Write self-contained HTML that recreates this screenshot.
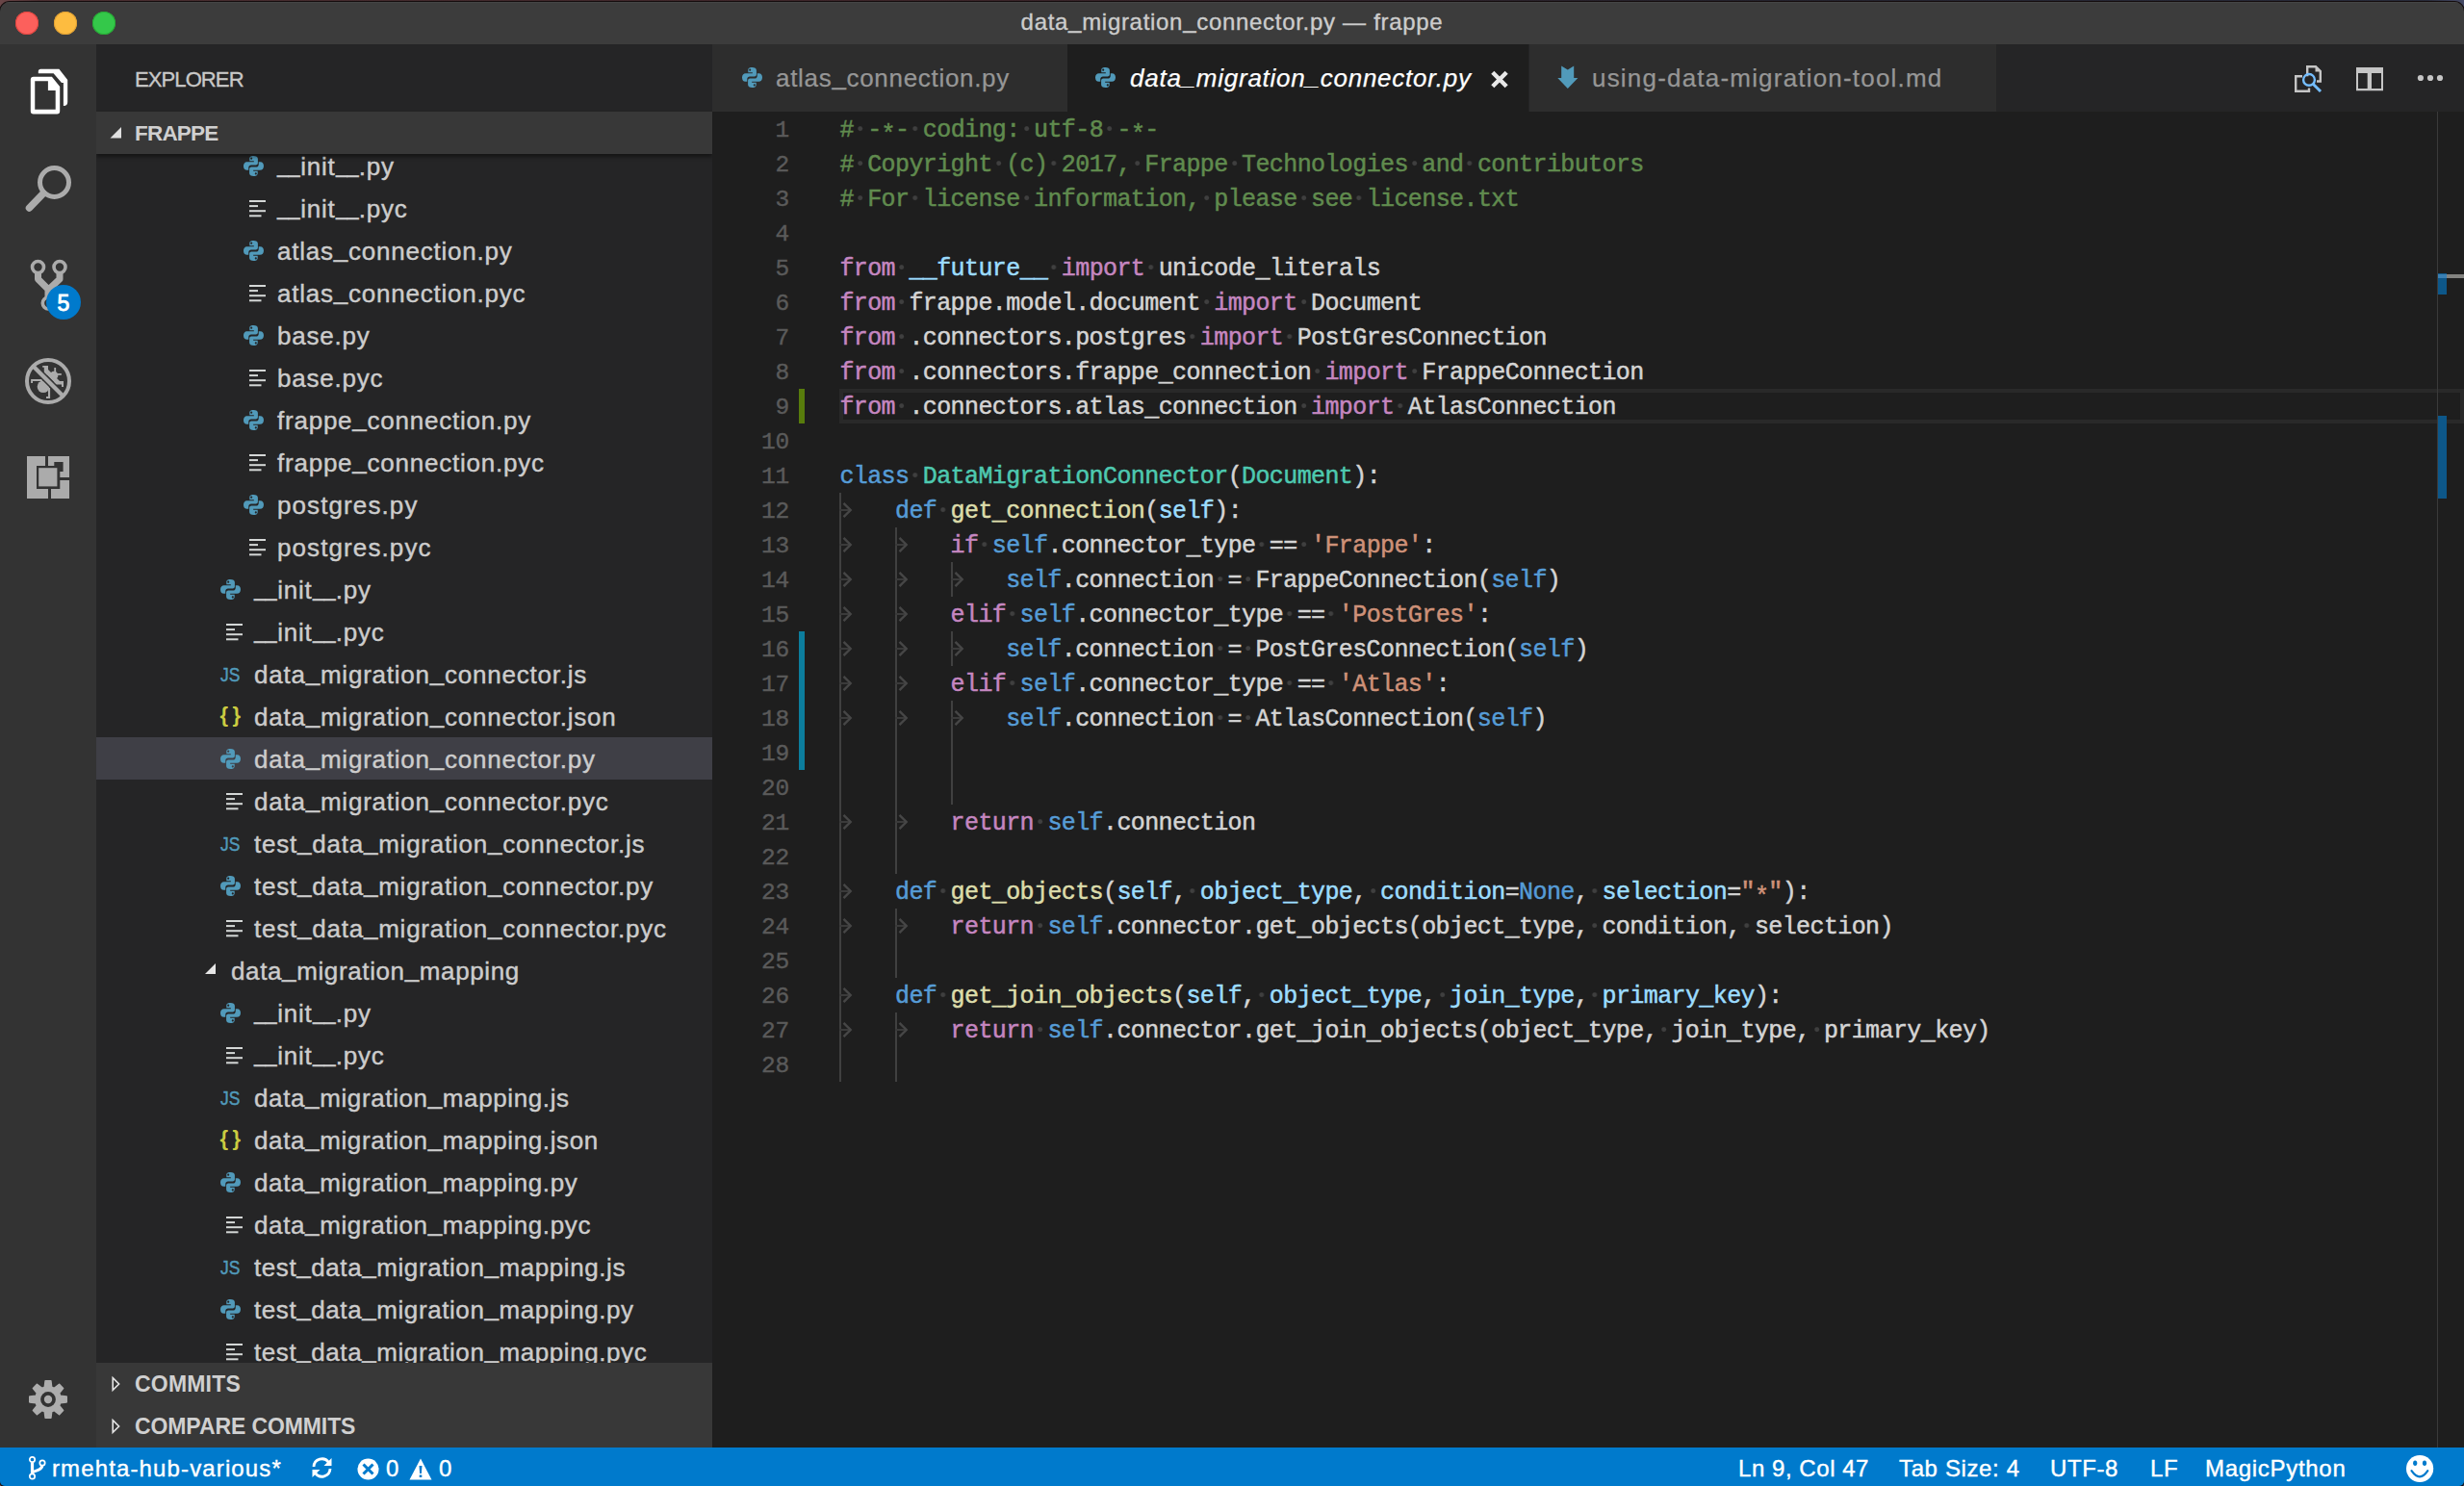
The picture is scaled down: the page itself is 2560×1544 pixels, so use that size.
<!DOCTYPE html>
<html><head><meta charset="utf-8"><title>VS Code</title>
<style>
*{box-sizing:border-box;margin:0;padding:0}
html,body{width:2560px;height:1544px;overflow:hidden;background:#1a1012;font-family:"Liberation Sans",sans-serif;}
#desk{position:absolute;left:0;top:0;width:2560px;height:1544px;background:linear-gradient(90deg,#6a4648 0,#4a2e30 1.500%,#3a2428 40%,#24222c 70%,#282b3a 98.500%,#454a66 100%);}
#win{position:absolute;left:0;top:2px;width:2560px;height:1542px;border-radius:10px 10px 5px 5px;overflow:hidden;background:#1e1e1e;box-shadow:0 0 0 1px #150d0e;}
#title{position:absolute;left:0;top:0;width:2560px;height:44px;background:#3c3c3c;border-top:1px solid #454545;}
#title .t{position:absolute;left:0;width:2560px;top:5px;text-align:center;color:#cccccc;font-size:24px;line-height:30px;letter-spacing:0.7px;-webkit-text-stroke:0.350px #cccccc;}
.tl{position:absolute;top:9px;width:24px;height:24px;border-radius:50%;}
#title u{text-decoration:none;position:relative;top:-2px;}
#act{position:absolute;left:0;top:44px;width:100px;height:1458px;background:#333333;}
#act svg{position:absolute;left:0;top:0;}
#side{position:absolute;left:100px;top:44px;width:640px;height:1458px;background:#252526;overflow:hidden;}
#ed{position:absolute;left:740px;top:44px;width:1820px;height:1458px;background:#1e1e1e;overflow:hidden;}
#tabs{position:absolute;left:0;top:0;width:1820px;height:70px;background:#252526;}
#status{position:absolute;left:0;top:1502px;width:2560px;height:40px;background:#007acc;color:#fff;font-size:24px;}

#side .hdr{position:absolute;left:0;width:640px;color:#cccccc;}
#explorer{top:0;height:70px;}
#explorer span{position:absolute;left:40px;top:21.500px;-webkit-text-stroke:0.350px #c8c8c8;font-size:22px;line-height:30px;letter-spacing:-0.9px;color:#c8c8c8;}
.sec{position:absolute;left:0;width:640px;height:44px;background:#383838;color:#d0d0d0;font-weight:bold;font-size:23px;line-height:45px;}
.sec span{position:absolute;left:40px;top:0;}
#tree{position:absolute;left:0;top:114px;width:640px;height:1256px;overflow:hidden;}
.row{position:absolute;left:0;width:640px;height:44px;color:#cccccc;font-size:26px;line-height:44px;letter-spacing:0.77px;white-space:pre;}
.row.sel{background:#3f3f46;}
.row .nm{position:absolute;top:0.500px;-webkit-text-stroke:0.420px #cccccc;}
.row .nm u{text-decoration:none;position:relative;top:-2.400px;}
.row .nm u.d{display:inline-block;width:24.200px;letter-spacing:0;transform:scaleX(0.820);transform-origin:0 50%;}
.row svg{position:absolute;top:11px;}
.row .js{position:absolute;top:1px;font-size:21px;color:#519aba;letter-spacing:0;-webkit-text-stroke:0.450px #519aba;transform:scaleX(0.830);transform-origin:0 50%;}
.row .json{position:absolute;top:-1px;margin-left:0.500px;font-size:22px;color:#cbcb41;letter-spacing:4.500px;font-weight:bold;}

.tab{position:absolute;top:0;height:70px;font-size:26px;line-height:70px;white-space:pre;}
.tab .nm{position:absolute;top:0;-webkit-text-stroke:0.25px;}
.tab svg{position:absolute;}
#code{position:absolute;left:0;top:70px;width:1820px;height:1388px;font-family:"Liberation Mono",monospace;font-size:25px;letter-spacing:-0.602px;}
.ln{position:absolute;left:0;width:79.900px;font-size:24.500px;letter-spacing:-0.300px;height:36px;line-height:36px;text-align:right;color:#5a5a5a;padding-top:2px;-webkit-text-stroke:0.400px #5a5a5a;}
.cl{position:absolute;left:132.400px;height:36px;line-height:36px;white-space:pre;color:#d4d4d4;padding-top:2px;-webkit-text-stroke:0.500px;}
.cl i{font-style:normal}
.cl b{font-weight:normal;position:relative;top:5px;}
.cl u{text-decoration:none;position:relative;top:1px;}
.tab u{text-decoration:none;position:relative;top:-2.200px;}
.c{color:#608b4e}.k{color:#c586c0}.s{color:#569cd6}.v{color:#9cdcfe}.t{color:#4ec9b0}.f{color:#dcdcaa}.q{color:#ce9178}.w{display:inline-block;height:36px;vertical-align:top;background-image:radial-gradient(circle at 6.700px 17.600px,#3f3f3f 0,#3f3f3f 1.800px,rgba(63,63,63,0) 3px);background-size:14.400px 36px;margin-top:-2px;}
.tb{display:inline-block;width:57.600px;height:36px;vertical-align:top;margin-top:-2px;}
.tb svg{display:block;}
.g{position:absolute;width:2px;background:#404040;}

#status span{position:absolute;top:0;line-height:44px;white-space:pre;-webkit-text-stroke:0.4px #fff;}
#status svg{position:absolute;}
</style></head><body>
<div id="desk"></div>
<div id="win">
<div id="title"><div class="t">data<u>_</u>migration<u>_</u>connector.py — frappe</div>
<div class="tl" style="left:16px;background:#fc605c;box-shadow:inset 0 0 0 1px #e2453f"></div>
<div class="tl" style="left:56px;background:#fdbc40;box-shadow:inset 0 0 0 1px #e0a033"></div>
<div class="tl" style="left:96px;background:#34c84a;box-shadow:inset 0 0 0 1px #27aa35"></div>
</div>
<div id="act"><svg width="100" height="1458" viewBox="0 46 100 1458">
<!-- files -->
<path fill="#fff" fill-rule="evenodd" d="M34.800 79.800 H53.900 L62.200 90.100 V115.400 Q62.200 118.400 59.200 118.400 H34.800 Q31.800 118.400 31.800 115.400 V82.800 Q31.800 79.800 34.800 79.800 Z M36.250 84.300 H49.900 V93.900 H57.700 V113.700 H36.250 Z"/>
<path fill="#fff" d="M39.800 76.200 V74.300 Q39.800 71.800 42.300 71.800 H61.400 L70.200 83.100 V106 Q70.200 110 66.200 110 H65.900 V85.900 H64 L55.600 76.200 Z"/>
<!-- search -->
<g fill="none" stroke="#ababab" stroke-linecap="round">
<circle cx="56.5" cy="189.5" r="15" stroke-width="5"/>
<path d="M45 201 L30.5 216" stroke-width="7.5"/>
</g>
<!-- git -->
<g fill="none" stroke="#ababab" stroke-width="3.6">
<circle cx="39.5" cy="277.5" r="6"/><circle cx="62" cy="277.5" r="6"/><circle cx="50.300" cy="315" r="6"/>
</g>
<path d="M39.500 284 V290 L50 300.500 V309 M62 284 V290 L52 299.500" fill="none" stroke="#ababab" stroke-width="7" stroke-linejoin="round"/>
<circle cx="66" cy="314" r="18" fill="#007acc"/>
<text x="66" y="322.5" text-anchor="middle" font-family="Liberation Sans" font-size="23" fill="#fff" stroke="#fff" stroke-width="0.900">5</text>
<!-- debug -->
<g fill="#ababab">
<circle cx="45" cy="401.700" r="6.300"/>
<circle cx="56.100" cy="390" r="4.300"/>
<path d="M32.100 394 H44 V396.100 H34 V398 H32.100 Z"/>
<path d="M50 403 H52.100 V414 H48 V412 H50 Z"/>
<path d="M44.200 380 H50 V390 H45.800 V381.800 H44.200 Z"/>
<rect x="56.300" y="382" width="1.800" height="5"/>
<rect x="58" y="388" width="5.800" height="1.800"/>
<path d="M56 396 H66 V402 H64 V399.500 H56 Z"/>
<path d="M47.500 385 L60.500 398" stroke="#ababab" stroke-width="5" fill="none"/>
</g>
<path d="M34 380 L66 412" stroke="#333" stroke-width="7.400" fill="none"/>
<g fill="none" stroke="#ababab">
<circle cx="50" cy="396" r="22" stroke-width="4"/>
<path d="M34.500 380.500 L65.500 411.500" stroke-width="4.300"/>
</g>
<!-- extensions -->
<g fill="#ababab">
<path d="M28 474 H47 V484 H38 V508 H50 V518 H28 Z"/>
<path d="M50 474 H72 V496 H62.300 V490 H65.600 V480 H56.300 V484 H50 Z"/>
<path d="M62.300 499 H72 V518 H53 V508 H62.300 Z"/>
<rect x="40.200" y="486.200" width="19.200" height="19.200"/>
</g>
<!-- gear -->
<g transform="translate(50 1454)">
<path d="M-3.64 -12.69 L-2.87 -19.19 L2.87 -19.19 L3.64 -12.69 L6.40 -11.54 L11.54 -15.59 L15.59 -11.54 L11.54 -6.40 L12.69 -3.64 L19.19 -2.87 L19.19 2.87 L12.69 3.64 L11.54 6.40 L15.59 11.54 L11.54 15.59 L6.40 11.54 L3.64 12.69 L2.87 19.19 L-2.87 19.19 L-3.64 12.69 L-6.40 11.54 L-11.54 15.59 L-15.59 11.54 L-11.54 6.40 L-12.69 3.64 L-19.19 2.87 L-19.19 -2.87 L-12.69 -3.64 L-11.54 -6.40 L-15.59 -11.54 L-11.54 -15.59 L-6.40 -11.54 Z" fill="#adadad" stroke="#adadad" stroke-width="1.6" stroke-linejoin="round"/>
<circle r="7.900" fill="#333"/><circle r="4.200" fill="#adadad"/>
</g>
</svg></div>
<div id="side"><div id="explorer" class="hdr"><span>EXPLORER</span></div>
<div id="tree"><div class="row" style="top:-10px"><svg style="left:153px;top:12px" width="21" height="21" viewBox="0 0 20 20"><g fill="#519aba" fill-rule="evenodd"><path d="M9.8 0C6.6 0 6 1.3 6 2.8V5h4.3v.9H3.6C1.4 5.9 0 7.500 0 10s1.200 4.100 3.300 4.100H5v-2.600C5 10 6.200 9 7.600 9h4.600c1.200 0 2-.9 2-2.100V2.800C14.200 1 12.600 0 9.800 0zM7.800 1.500a1 1 0 1 1 0 2 1 1 0 0 1 0-2z"/><path transform="rotate(180 10 10)" d="M9.8 0C6.6 0 6 1.3 6 2.8V5h4.3v.9H3.6C1.4 5.9 0 7.500 0 10s1.200 4.100 3.300 4.100H5v-2.600C5 10 6.200 9 7.600 9h4.600c1.200 0 2-.9 2-2.100V2.800C14.200 1 12.600 0 9.800 0zM7.800 1.500a1 1 0 1 1 0 2 1 1 0 0 1 0-2z"/></g></svg><span class="nm" style="left:188px;letter-spacing:0.77px"><u class="d">__</u>init<u class="d">__</u>.py</span></div><div class="row" style="top:34px"><svg style="left:159px;top:14px" width="18" height="18" viewBox="0 0 18 18"><g fill="#d4d7d6"><rect x="0" y="0" width="17" height="2"/><rect x="0" y="5.100" width="9" height="2"/><rect x="0" y="10.200" width="17" height="2"/><rect x="0" y="15.300" width="12.500" height="2"/></g></svg><span class="nm" style="left:188px;letter-spacing:0.77px"><u class="d">__</u>init<u class="d">__</u>.pyc</span></div><div class="row" style="top:78px"><svg style="left:153px;top:12px" width="21" height="21" viewBox="0 0 20 20"><g fill="#519aba" fill-rule="evenodd"><path d="M9.8 0C6.6 0 6 1.3 6 2.8V5h4.3v.9H3.6C1.4 5.9 0 7.500 0 10s1.200 4.100 3.300 4.100H5v-2.600C5 10 6.200 9 7.600 9h4.600c1.200 0 2-.9 2-2.100V2.800C14.200 1 12.600 0 9.800 0zM7.800 1.500a1 1 0 1 1 0 2 1 1 0 0 1 0-2z"/><path transform="rotate(180 10 10)" d="M9.8 0C6.6 0 6 1.3 6 2.8V5h4.3v.9H3.6C1.4 5.9 0 7.500 0 10s1.200 4.100 3.300 4.100H5v-2.600C5 10 6.200 9 7.600 9h4.600c1.200 0 2-.9 2-2.100V2.800C14.200 1 12.600 0 9.800 0zM7.800 1.500a1 1 0 1 1 0 2 1 1 0 0 1 0-2z"/></g></svg><span class="nm" style="left:188px;letter-spacing:0.77px">atlas<u>_</u>connection.py</span></div><div class="row" style="top:122px"><svg style="left:159px;top:14px" width="18" height="18" viewBox="0 0 18 18"><g fill="#d4d7d6"><rect x="0" y="0" width="17" height="2"/><rect x="0" y="5.100" width="9" height="2"/><rect x="0" y="10.200" width="17" height="2"/><rect x="0" y="15.300" width="12.500" height="2"/></g></svg><span class="nm" style="left:188px;letter-spacing:0.77px">atlas<u>_</u>connection.pyc</span></div><div class="row" style="top:166px"><svg style="left:153px;top:12px" width="21" height="21" viewBox="0 0 20 20"><g fill="#519aba" fill-rule="evenodd"><path d="M9.8 0C6.6 0 6 1.3 6 2.8V5h4.3v.9H3.6C1.4 5.9 0 7.500 0 10s1.200 4.100 3.300 4.100H5v-2.600C5 10 6.200 9 7.600 9h4.600c1.200 0 2-.9 2-2.100V2.800C14.200 1 12.600 0 9.800 0zM7.800 1.500a1 1 0 1 1 0 2 1 1 0 0 1 0-2z"/><path transform="rotate(180 10 10)" d="M9.8 0C6.6 0 6 1.3 6 2.8V5h4.3v.9H3.6C1.4 5.9 0 7.500 0 10s1.200 4.100 3.300 4.100H5v-2.600C5 10 6.200 9 7.600 9h4.600c1.200 0 2-.9 2-2.100V2.800C14.200 1 12.600 0 9.800 0zM7.800 1.500a1 1 0 1 1 0 2 1 1 0 0 1 0-2z"/></g></svg><span class="nm" style="left:188px;letter-spacing:0.77px">base.py</span></div><div class="row" style="top:210px"><svg style="left:159px;top:14px" width="18" height="18" viewBox="0 0 18 18"><g fill="#d4d7d6"><rect x="0" y="0" width="17" height="2"/><rect x="0" y="5.100" width="9" height="2"/><rect x="0" y="10.200" width="17" height="2"/><rect x="0" y="15.300" width="12.500" height="2"/></g></svg><span class="nm" style="left:188px;letter-spacing:0.77px">base.pyc</span></div><div class="row" style="top:254px"><svg style="left:153px;top:12px" width="21" height="21" viewBox="0 0 20 20"><g fill="#519aba" fill-rule="evenodd"><path d="M9.8 0C6.6 0 6 1.3 6 2.8V5h4.3v.9H3.6C1.4 5.9 0 7.500 0 10s1.200 4.100 3.300 4.100H5v-2.600C5 10 6.200 9 7.600 9h4.600c1.200 0 2-.9 2-2.100V2.800C14.200 1 12.600 0 9.800 0zM7.800 1.500a1 1 0 1 1 0 2 1 1 0 0 1 0-2z"/><path transform="rotate(180 10 10)" d="M9.8 0C6.6 0 6 1.3 6 2.8V5h4.3v.9H3.6C1.4 5.9 0 7.500 0 10s1.200 4.100 3.300 4.100H5v-2.600C5 10 6.200 9 7.600 9h4.600c1.200 0 2-.9 2-2.100V2.800C14.200 1 12.600 0 9.800 0zM7.800 1.500a1 1 0 1 1 0 2 1 1 0 0 1 0-2z"/></g></svg><span class="nm" style="left:188px;letter-spacing:0.77px">frappe<u>_</u>connection.py</span></div><div class="row" style="top:298px"><svg style="left:159px;top:14px" width="18" height="18" viewBox="0 0 18 18"><g fill="#d4d7d6"><rect x="0" y="0" width="17" height="2"/><rect x="0" y="5.100" width="9" height="2"/><rect x="0" y="10.200" width="17" height="2"/><rect x="0" y="15.300" width="12.500" height="2"/></g></svg><span class="nm" style="left:188px;letter-spacing:0.77px">frappe<u>_</u>connection.pyc</span></div><div class="row" style="top:342px"><svg style="left:153px;top:12px" width="21" height="21" viewBox="0 0 20 20"><g fill="#519aba" fill-rule="evenodd"><path d="M9.8 0C6.6 0 6 1.3 6 2.8V5h4.3v.9H3.6C1.4 5.9 0 7.500 0 10s1.200 4.100 3.300 4.100H5v-2.600C5 10 6.200 9 7.600 9h4.600c1.200 0 2-.9 2-2.100V2.800C14.200 1 12.600 0 9.800 0zM7.800 1.500a1 1 0 1 1 0 2 1 1 0 0 1 0-2z"/><path transform="rotate(180 10 10)" d="M9.8 0C6.6 0 6 1.3 6 2.8V5h4.3v.9H3.6C1.4 5.9 0 7.500 0 10s1.200 4.100 3.300 4.100H5v-2.600C5 10 6.200 9 7.600 9h4.600c1.200 0 2-.9 2-2.100V2.800C14.200 1 12.600 0 9.800 0zM7.800 1.500a1 1 0 1 1 0 2 1 1 0 0 1 0-2z"/></g></svg><span class="nm" style="left:188px;letter-spacing:1.10px">postgres.py</span></div><div class="row" style="top:386px"><svg style="left:159px;top:14px" width="18" height="18" viewBox="0 0 18 18"><g fill="#d4d7d6"><rect x="0" y="0" width="17" height="2"/><rect x="0" y="5.100" width="9" height="2"/><rect x="0" y="10.200" width="17" height="2"/><rect x="0" y="15.300" width="12.500" height="2"/></g></svg><span class="nm" style="left:188px;letter-spacing:1.10px">postgres.pyc</span></div><div class="row" style="top:430px"><svg style="left:129px;top:12px" width="21" height="21" viewBox="0 0 20 20"><g fill="#519aba" fill-rule="evenodd"><path d="M9.8 0C6.6 0 6 1.3 6 2.8V5h4.3v.9H3.6C1.4 5.9 0 7.500 0 10s1.200 4.100 3.300 4.100H5v-2.600C5 10 6.200 9 7.600 9h4.600c1.200 0 2-.9 2-2.100V2.800C14.200 1 12.600 0 9.800 0zM7.800 1.500a1 1 0 1 1 0 2 1 1 0 0 1 0-2z"/><path transform="rotate(180 10 10)" d="M9.8 0C6.6 0 6 1.3 6 2.8V5h4.3v.9H3.6C1.4 5.9 0 7.500 0 10s1.200 4.100 3.300 4.100H5v-2.600C5 10 6.200 9 7.600 9h4.600c1.200 0 2-.9 2-2.100V2.800C14.200 1 12.600 0 9.800 0zM7.800 1.500a1 1 0 1 1 0 2 1 1 0 0 1 0-2z"/></g></svg><span class="nm" style="left:164px;letter-spacing:0.77px"><u class="d">__</u>init<u class="d">__</u>.py</span></div><div class="row" style="top:474px"><svg style="left:135px;top:14px" width="18" height="18" viewBox="0 0 18 18"><g fill="#d4d7d6"><rect x="0" y="0" width="17" height="2"/><rect x="0" y="5.100" width="9" height="2"/><rect x="0" y="10.200" width="17" height="2"/><rect x="0" y="15.300" width="12.500" height="2"/></g></svg><span class="nm" style="left:164px;letter-spacing:0.77px"><u class="d">__</u>init<u class="d">__</u>.pyc</span></div><div class="row" style="top:518px"><span class="js" style="left:129px">JS</span><span class="nm" style="left:164px;letter-spacing:0.77px">data<u>_</u>migration<u>_</u>connector.js</span></div><div class="row" style="top:562px"><span class="json" style="left:128px">{}</span><span class="nm" style="left:164px;letter-spacing:0.77px">data<u>_</u>migration<u>_</u>connector.json</span></div><div class="row sel" style="top:606px"><svg style="left:129px;top:12px" width="21" height="21" viewBox="0 0 20 20"><g fill="#519aba" fill-rule="evenodd"><path d="M9.8 0C6.6 0 6 1.3 6 2.8V5h4.3v.9H3.6C1.4 5.9 0 7.500 0 10s1.200 4.100 3.300 4.100H5v-2.600C5 10 6.200 9 7.600 9h4.600c1.200 0 2-.9 2-2.100V2.800C14.200 1 12.600 0 9.800 0zM7.800 1.500a1 1 0 1 1 0 2 1 1 0 0 1 0-2z"/><path transform="rotate(180 10 10)" d="M9.8 0C6.6 0 6 1.3 6 2.8V5h4.3v.9H3.6C1.4 5.9 0 7.500 0 10s1.200 4.100 3.300 4.100H5v-2.600C5 10 6.200 9 7.600 9h4.600c1.200 0 2-.9 2-2.100V2.800C14.200 1 12.600 0 9.800 0zM7.800 1.500a1 1 0 1 1 0 2 1 1 0 0 1 0-2z"/></g></svg><span class="nm" style="left:164px;letter-spacing:0.77px">data<u>_</u>migration<u>_</u>connector.py</span></div><div class="row" style="top:650px"><svg style="left:135px;top:14px" width="18" height="18" viewBox="0 0 18 18"><g fill="#d4d7d6"><rect x="0" y="0" width="17" height="2"/><rect x="0" y="5.100" width="9" height="2"/><rect x="0" y="10.200" width="17" height="2"/><rect x="0" y="15.300" width="12.500" height="2"/></g></svg><span class="nm" style="left:164px;letter-spacing:0.77px">data<u>_</u>migration<u>_</u>connector.pyc</span></div><div class="row" style="top:694px"><span class="js" style="left:129px">JS</span><span class="nm" style="left:164px;letter-spacing:0.77px">test<u>_</u>data<u>_</u>migration<u>_</u>connector.js</span></div><div class="row" style="top:738px"><svg style="left:129px;top:12px" width="21" height="21" viewBox="0 0 20 20"><g fill="#519aba" fill-rule="evenodd"><path d="M9.8 0C6.6 0 6 1.3 6 2.8V5h4.3v.9H3.6C1.4 5.9 0 7.500 0 10s1.200 4.100 3.300 4.100H5v-2.600C5 10 6.200 9 7.600 9h4.600c1.200 0 2-.9 2-2.100V2.800C14.200 1 12.600 0 9.800 0zM7.800 1.500a1 1 0 1 1 0 2 1 1 0 0 1 0-2z"/><path transform="rotate(180 10 10)" d="M9.8 0C6.6 0 6 1.3 6 2.8V5h4.3v.9H3.6C1.4 5.9 0 7.500 0 10s1.200 4.100 3.300 4.100H5v-2.600C5 10 6.200 9 7.600 9h4.600c1.200 0 2-.9 2-2.100V2.800C14.200 1 12.600 0 9.800 0zM7.800 1.500a1 1 0 1 1 0 2 1 1 0 0 1 0-2z"/></g></svg><span class="nm" style="left:164px;letter-spacing:0.77px">test<u>_</u>data<u>_</u>migration<u>_</u>connector.py</span></div><div class="row" style="top:782px"><svg style="left:135px;top:14px" width="18" height="18" viewBox="0 0 18 18"><g fill="#d4d7d6"><rect x="0" y="0" width="17" height="2"/><rect x="0" y="5.100" width="9" height="2"/><rect x="0" y="10.200" width="17" height="2"/><rect x="0" y="15.300" width="12.500" height="2"/></g></svg><span class="nm" style="left:164px;letter-spacing:0.77px">test<u>_</u>data<u>_</u>migration<u>_</u>connector.pyc</span></div><div class="row" style="top:826px"><svg style="left:112px;top:14px" width="14" height="14" viewBox="0 0 14 14"><path d="M12 1 V12 H1 Z" fill="#e6e6e6"/></svg><span class="nm" style="left:140px;letter-spacing:0.62px">data<u>_</u>migration<u>_</u>mapping</span></div><div class="row" style="top:870px"><svg style="left:129px;top:12px" width="21" height="21" viewBox="0 0 20 20"><g fill="#519aba" fill-rule="evenodd"><path d="M9.8 0C6.6 0 6 1.3 6 2.8V5h4.3v.9H3.6C1.4 5.9 0 7.500 0 10s1.200 4.100 3.300 4.100H5v-2.600C5 10 6.200 9 7.600 9h4.600c1.200 0 2-.9 2-2.100V2.800C14.200 1 12.600 0 9.800 0zM7.800 1.500a1 1 0 1 1 0 2 1 1 0 0 1 0-2z"/><path transform="rotate(180 10 10)" d="M9.8 0C6.6 0 6 1.3 6 2.8V5h4.3v.9H3.6C1.4 5.9 0 7.500 0 10s1.200 4.100 3.300 4.100H5v-2.600C5 10 6.200 9 7.600 9h4.600c1.200 0 2-.9 2-2.100V2.800C14.200 1 12.600 0 9.800 0zM7.800 1.500a1 1 0 1 1 0 2 1 1 0 0 1 0-2z"/></g></svg><span class="nm" style="left:164px;letter-spacing:0.77px"><u class="d">__</u>init<u class="d">__</u>.py</span></div><div class="row" style="top:914px"><svg style="left:135px;top:14px" width="18" height="18" viewBox="0 0 18 18"><g fill="#d4d7d6"><rect x="0" y="0" width="17" height="2"/><rect x="0" y="5.100" width="9" height="2"/><rect x="0" y="10.200" width="17" height="2"/><rect x="0" y="15.300" width="12.500" height="2"/></g></svg><span class="nm" style="left:164px;letter-spacing:0.77px"><u class="d">__</u>init<u class="d">__</u>.pyc</span></div><div class="row" style="top:958px"><span class="js" style="left:129px">JS</span><span class="nm" style="left:164px;letter-spacing:0.62px">data<u>_</u>migration<u>_</u>mapping.js</span></div><div class="row" style="top:1002px"><span class="json" style="left:128px">{}</span><span class="nm" style="left:164px;letter-spacing:0.62px">data<u>_</u>migration<u>_</u>mapping.json</span></div><div class="row" style="top:1046px"><svg style="left:129px;top:12px" width="21" height="21" viewBox="0 0 20 20"><g fill="#519aba" fill-rule="evenodd"><path d="M9.8 0C6.6 0 6 1.3 6 2.8V5h4.3v.9H3.6C1.4 5.9 0 7.500 0 10s1.200 4.100 3.300 4.100H5v-2.600C5 10 6.200 9 7.600 9h4.600c1.200 0 2-.9 2-2.100V2.800C14.200 1 12.600 0 9.800 0zM7.800 1.500a1 1 0 1 1 0 2 1 1 0 0 1 0-2z"/><path transform="rotate(180 10 10)" d="M9.8 0C6.6 0 6 1.3 6 2.8V5h4.3v.9H3.6C1.4 5.9 0 7.500 0 10s1.200 4.100 3.300 4.100H5v-2.600C5 10 6.200 9 7.600 9h4.600c1.200 0 2-.9 2-2.100V2.800C14.200 1 12.600 0 9.800 0zM7.800 1.500a1 1 0 1 1 0 2 1 1 0 0 1 0-2z"/></g></svg><span class="nm" style="left:164px;letter-spacing:0.62px">data<u>_</u>migration<u>_</u>mapping.py</span></div><div class="row" style="top:1090px"><svg style="left:135px;top:14px" width="18" height="18" viewBox="0 0 18 18"><g fill="#d4d7d6"><rect x="0" y="0" width="17" height="2"/><rect x="0" y="5.100" width="9" height="2"/><rect x="0" y="10.200" width="17" height="2"/><rect x="0" y="15.300" width="12.500" height="2"/></g></svg><span class="nm" style="left:164px;letter-spacing:0.62px">data<u>_</u>migration<u>_</u>mapping.pyc</span></div><div class="row" style="top:1134px"><span class="js" style="left:129px">JS</span><span class="nm" style="left:164px;letter-spacing:0.58px">test<u>_</u>data<u>_</u>migration<u>_</u>mapping.js</span></div><div class="row" style="top:1178px"><svg style="left:129px;top:12px" width="21" height="21" viewBox="0 0 20 20"><g fill="#519aba" fill-rule="evenodd"><path d="M9.8 0C6.6 0 6 1.3 6 2.8V5h4.3v.9H3.6C1.4 5.9 0 7.500 0 10s1.200 4.100 3.300 4.100H5v-2.600C5 10 6.200 9 7.600 9h4.600c1.200 0 2-.9 2-2.100V2.800C14.200 1 12.600 0 9.800 0zM7.800 1.500a1 1 0 1 1 0 2 1 1 0 0 1 0-2z"/><path transform="rotate(180 10 10)" d="M9.8 0C6.6 0 6 1.3 6 2.8V5h4.3v.9H3.6C1.4 5.9 0 7.500 0 10s1.200 4.100 3.300 4.100H5v-2.600C5 10 6.200 9 7.600 9h4.600c1.200 0 2-.9 2-2.100V2.800C14.200 1 12.600 0 9.800 0zM7.800 1.500a1 1 0 1 1 0 2 1 1 0 0 1 0-2z"/></g></svg><span class="nm" style="left:164px;letter-spacing:0.58px">test<u>_</u>data<u>_</u>migration<u>_</u>mapping.py</span></div><div class="row" style="top:1222px"><svg style="left:135px;top:14px" width="18" height="18" viewBox="0 0 18 18"><g fill="#d4d7d6"><rect x="0" y="0" width="17" height="2"/><rect x="0" y="5.100" width="9" height="2"/><rect x="0" y="10.200" width="17" height="2"/><rect x="0" y="15.300" width="12.500" height="2"/></g></svg><span class="nm" style="left:164px;letter-spacing:0.58px">test<u>_</u>data<u>_</u>migration<u>_</u>mapping.pyc</span></div></div>
<div class="sec" style="top:70px;box-shadow:0 3px 4px rgba(0,0,0,0.45)"><svg style="position:absolute;left:14px;top:15px" width="14" height="14" viewBox="0 0 14 14"><path d="M12 1 V12.500 H0.500 Z" fill="#e0e0e0"/></svg><span style="letter-spacing:-0.800px;font-size:22.500px">FRAPPE</span></div>
<div class="sec" style="top:1370px"><svg style="position:absolute;left:14px;top:13px" width="12" height="18" viewBox="0 0 12 18"><path d="M3.200 2.600 L9.600 9 L3.200 15.400 Z" fill="none" stroke="#e4e4e4" stroke-width="1.600" stroke-linejoin="miter"/></svg><span style="letter-spacing:0.2px">COMMITS</span></div>
<div class="sec" style="top:1414px"><svg style="position:absolute;left:14px;top:13px" width="12" height="18" viewBox="0 0 12 18"><path d="M3.200 2.600 L9.600 9 L3.200 15.400 Z" fill="none" stroke="#e4e4e4" stroke-width="1.600" stroke-linejoin="miter"/></svg><span style="letter-spacing:-0.1px">COMPARE COMMITS</span></div></div>
<div id="ed"><div id="tabs"><div class="tab" style="left:0;width:369px;background:#2d2d2d;color:#969696"><svg style="left:31px;top:24px" width="21" height="21" viewBox="0 0 20 20"><g fill="#519aba" fill-rule="evenodd"><path d="M9.8 0C6.6 0 6 1.3 6 2.8V5h4.3v.9H3.6C1.4 5.9 0 7.500 0 10s1.200 4.100 3.300 4.100H5v-2.600C5 10 6.200 9 7.600 9h4.600c1.200 0 2-.9 2-2.100V2.800C14.200 1 12.600 0 9.800 0zM7.800 1.500a1 1 0 1 1 0 2 1 1 0 0 1 0-2z"/><path transform="rotate(180 10 10)" d="M9.8 0C6.6 0 6 1.3 6 2.8V5h4.3v.9H3.6C1.4 5.9 0 7.500 0 10s1.200 4.100 3.300 4.100H5v-2.600C5 10 6.200 9 7.600 9h4.600c1.200 0 2-.9 2-2.100V2.800C14.200 1 12.600 0 9.800 0zM7.800 1.500a1 1 0 1 1 0 2 1 1 0 0 1 0-2z"/></g></svg><span class="nm" style="left:66px;letter-spacing:0.69px">atlas<u>_</u>connection.py</span></div><div class="tab" style="left:369px;width:479px;background:#1e1e1e;color:#ffffff;font-style:italic"><svg style="left:29px;top:24px" width="21" height="21" viewBox="0 0 20 20"><g fill="#519aba" fill-rule="evenodd"><path d="M9.8 0C6.6 0 6 1.3 6 2.8V5h4.3v.9H3.6C1.4 5.9 0 7.500 0 10s1.200 4.100 3.300 4.100H5v-2.600C5 10 6.200 9 7.600 9h4.600c1.200 0 2-.9 2-2.100V2.800C14.200 1 12.600 0 9.800 0zM7.800 1.500a1 1 0 1 1 0 2 1 1 0 0 1 0-2z"/><path transform="rotate(180 10 10)" d="M9.8 0C6.6 0 6 1.3 6 2.8V5h4.3v.9H3.6C1.4 5.9 0 7.500 0 10s1.200 4.100 3.300 4.100H5v-2.600C5 10 6.200 9 7.600 9h4.600c1.200 0 2-.9 2-2.100V2.800C14.200 1 12.600 0 9.800 0zM7.800 1.500a1 1 0 1 1 0 2 1 1 0 0 1 0-2z"/></g></svg><span class="nm" style="left:65px;letter-spacing:0.75px">data<u>_</u>migration<u>_</u>connector.py</span><svg style="left:438px;top:25px" width="22" height="22" viewBox="0 0 22 22"><path d="M3.800 4.300 L18.200 18.700 M18.200 4.300 L3.800 18.700" stroke="#e8e8e8" stroke-width="4.400" fill="none"/></svg></div><div class="tab" style="left:849px;width:485px;background:#2d2d2d;color:#969696"><svg style="left:29px;top:22px" width="22" height="25" viewBox="0 0 22 25"><path d="M4.2 0.600 L10.800 4.600 L17.200 0.600 V13 H21.400 L10.800 24 L0.300 13 H4.200 Z" fill="#519aba"/></svg><span class="nm" style="left:65px;letter-spacing:1.2px">using-data-migration-tool.md</span></div><svg style="position:absolute;left:1630px;top:14px" width="180" height="44" viewBox="2370 60 180 44"><g fill="none" stroke="#c5c5c5" stroke-width="2.400"><path d="M2397.200 79.200 V69.200 H2406 L2410.800 74 V84.500 H2407"/><path d="M2392 79.200 H2385.200 V94.700 H2399 V91.500"/></g><path d="M2405.500 69 V74.500 H2411 Z" fill="#c5c5c5"/><circle cx="2399" cy="82.900" r="5.900" fill="none" stroke="#75beff" stroke-width="2.400"/><path d="M2403.200 87.200 L2411 95" stroke="#75beff" stroke-width="3" fill="none"/><path d="M2448 70 H2476 V94.200 H2448 Z M2450 76 V92 H2459.700 V76 Z M2464 76 V92 H2474 V76 Z" fill="#c5c5c5" fill-rule="evenodd"/><circle cx="2514.900" cy="81" r="3.100" fill="#c5c5c5"/><circle cx="2525" cy="81" r="3.100" fill="#c5c5c5"/><circle cx="2535" cy="81" r="3.100" fill="#c5c5c5"/></svg></div><div id="code"><svg width="0" height="0" style="position:absolute"><symbol id="ar" viewBox="0 0 16 36"><path d="M0 18 H11" stroke="#3a3a3a" stroke-width="2" fill="none"/><path d="M4.500 10.800 L11.700 18 L4.500 25.200" stroke="#464646" stroke-width="2.400" fill="none"/></symbol></svg><div style="position:absolute;left:132px;top:288px;width:1688px;height:36px;border:4px solid #292929"></div><div style="position:absolute;left:90px;top:288px;width:6px;height:36px;background:#587c0c"></div><div style="position:absolute;left:90px;top:540px;width:6px;height:144px;background:#0c7d9d"></div><div class="g" style="left:132px;top:396px;height:612px"></div><div class="g" style="left:190px;top:432px;height:360px"></div><div class="g" style="left:190px;top:828px;height:72px"></div><div class="g" style="left:190px;top:936px;height:72px"></div><div class="g" style="left:248px;top:468px;height:36px"></div><div class="g" style="left:248px;top:540px;height:36px"></div><div class="g" style="left:248px;top:612px;height:108px"></div><div class="ln" style="top:0px">1</div><div class="cl" style="top:0px"><i class="c">#</i><i class="w"> </i><i class="c">-<b>*</b>-</i><i class="w"> </i><i class="c">coding:</i><i class="w"> </i><i class="c">utf-8</i><i class="w"> </i><i class="c">-<b>*</b>-</i></div><div class="ln" style="top:36px">2</div><div class="cl" style="top:36px"><i class="c">#</i><i class="w"> </i><i class="c">Copyright</i><i class="w"> </i><i class="c">(c)</i><i class="w"> </i><i class="c">2017,</i><i class="w"> </i><i class="c">Frappe</i><i class="w"> </i><i class="c">Technologies</i><i class="w"> </i><i class="c">and</i><i class="w"> </i><i class="c">contributors</i></div><div class="ln" style="top:72px">3</div><div class="cl" style="top:72px"><i class="c">#</i><i class="w"> </i><i class="c">For</i><i class="w"> </i><i class="c">license</i><i class="w"> </i><i class="c">information,</i><i class="w"> </i><i class="c">please</i><i class="w"> </i><i class="c">see</i><i class="w"> </i><i class="c">license.txt</i></div><div class="ln" style="top:108px">4</div><div class="cl" style="top:108px"></div><div class="ln" style="top:144px">5</div><div class="cl" style="top:144px"><i class="k">from</i><i class="w"> </i><i class="v"><u>_</u><u>_</u>future<u>_</u><u>_</u></i><i class="w"> </i><i class="k">import</i><i class="w"> </i>unicode<u>_</u>literals</div><div class="ln" style="top:180px">6</div><div class="cl" style="top:180px"><i class="k">from</i><i class="w"> </i>frappe.model.document<i class="w"> </i><i class="k">import</i><i class="w"> </i>Document</div><div class="ln" style="top:216px">7</div><div class="cl" style="top:216px"><i class="k">from</i><i class="w"> </i>.connectors.postgres<i class="w"> </i><i class="k">import</i><i class="w"> </i>PostGresConnection</div><div class="ln" style="top:252px">8</div><div class="cl" style="top:252px"><i class="k">from</i><i class="w"> </i>.connectors.frappe<u>_</u>connection<i class="w"> </i><i class="k">import</i><i class="w"> </i>FrappeConnection</div><div class="ln" style="top:288px">9</div><div class="cl" style="top:288px"><i class="k">from</i><i class="w"> </i>.connectors.atlas<u>_</u>connection<i class="w"> </i><i class="k">import</i><i class="w"> </i>AtlasConnection</div><div class="ln" style="top:324px">10</div><div class="cl" style="top:324px"></div><div class="ln" style="top:360px">11</div><div class="cl" style="top:360px"><i class="s">class</i><i class="w"> </i><i class="t">DataMigrationConnector</i>(<i class="t">Document</i>):</div><div class="ln" style="top:396px">12</div><div class="cl" style="top:396px"><i class="tb"><svg width="16" height="36"><use href="#ar"/></svg></i><i class="s">def</i><i class="w"> </i><i class="f">get<u>_</u>connection</i>(<i class="v">self</i>):</div><div class="ln" style="top:432px">13</div><div class="cl" style="top:432px"><i class="tb"><svg width="16" height="36"><use href="#ar"/></svg></i><i class="tb"><svg width="16" height="36"><use href="#ar"/></svg></i><i class="k">if</i><i class="w"> </i><i class="s">self</i>.connector<u>_</u>type<i class="w"> </i>==<i class="w"> </i><i class="q">'Frappe'</i>:</div><div class="ln" style="top:468px">14</div><div class="cl" style="top:468px"><i class="tb"><svg width="16" height="36"><use href="#ar"/></svg></i><i class="tb"><svg width="16" height="36"><use href="#ar"/></svg></i><i class="tb"><svg width="16" height="36"><use href="#ar"/></svg></i><i class="s">self</i>.connection<i class="w"> </i>=<i class="w"> </i>FrappeConnection(<i class="s">self</i>)</div><div class="ln" style="top:504px">15</div><div class="cl" style="top:504px"><i class="tb"><svg width="16" height="36"><use href="#ar"/></svg></i><i class="tb"><svg width="16" height="36"><use href="#ar"/></svg></i><i class="k">elif</i><i class="w"> </i><i class="s">self</i>.connector<u>_</u>type<i class="w"> </i>==<i class="w"> </i><i class="q">'PostGres'</i>:</div><div class="ln" style="top:540px">16</div><div class="cl" style="top:540px"><i class="tb"><svg width="16" height="36"><use href="#ar"/></svg></i><i class="tb"><svg width="16" height="36"><use href="#ar"/></svg></i><i class="tb"><svg width="16" height="36"><use href="#ar"/></svg></i><i class="s">self</i>.connection<i class="w"> </i>=<i class="w"> </i>PostGresConnection(<i class="s">self</i>)</div><div class="ln" style="top:576px">17</div><div class="cl" style="top:576px"><i class="tb"><svg width="16" height="36"><use href="#ar"/></svg></i><i class="tb"><svg width="16" height="36"><use href="#ar"/></svg></i><i class="k">elif</i><i class="w"> </i><i class="s">self</i>.connector<u>_</u>type<i class="w"> </i>==<i class="w"> </i><i class="q">'Atlas'</i>:</div><div class="ln" style="top:612px">18</div><div class="cl" style="top:612px"><i class="tb"><svg width="16" height="36"><use href="#ar"/></svg></i><i class="tb"><svg width="16" height="36"><use href="#ar"/></svg></i><i class="tb"><svg width="16" height="36"><use href="#ar"/></svg></i><i class="s">self</i>.connection<i class="w"> </i>=<i class="w"> </i>AtlasConnection(<i class="s">self</i>)</div><div class="ln" style="top:648px">19</div><div class="cl" style="top:648px"></div><div class="ln" style="top:684px">20</div><div class="cl" style="top:684px"></div><div class="ln" style="top:720px">21</div><div class="cl" style="top:720px"><i class="tb"><svg width="16" height="36"><use href="#ar"/></svg></i><i class="tb"><svg width="16" height="36"><use href="#ar"/></svg></i><i class="k">return</i><i class="w"> </i><i class="s">self</i>.connection</div><div class="ln" style="top:756px">22</div><div class="cl" style="top:756px"></div><div class="ln" style="top:792px">23</div><div class="cl" style="top:792px"><i class="tb"><svg width="16" height="36"><use href="#ar"/></svg></i><i class="s">def</i><i class="w"> </i><i class="f">get<u>_</u>objects</i>(<i class="v">self</i>,<i class="w"> </i><i class="v">object<u>_</u>type</i>,<i class="w"> </i><i class="v">condition</i>=<i class="s">None</i>,<i class="w"> </i><i class="v">selection</i>=<i class="q">"<b>*</b>"</i>):</div><div class="ln" style="top:828px">24</div><div class="cl" style="top:828px"><i class="tb"><svg width="16" height="36"><use href="#ar"/></svg></i><i class="tb"><svg width="16" height="36"><use href="#ar"/></svg></i><i class="k">return</i><i class="w"> </i><i class="s">self</i>.connector.get<u>_</u>objects(object<u>_</u>type,<i class="w"> </i>condition,<i class="w"> </i>selection)</div><div class="ln" style="top:864px">25</div><div class="cl" style="top:864px"></div><div class="ln" style="top:900px">26</div><div class="cl" style="top:900px"><i class="tb"><svg width="16" height="36"><use href="#ar"/></svg></i><i class="s">def</i><i class="w"> </i><i class="f">get<u>_</u>join<u>_</u>objects</i>(<i class="v">self</i>,<i class="w"> </i><i class="v">object<u>_</u>type</i>,<i class="w"> </i><i class="v">join<u>_</u>type</i>,<i class="w"> </i><i class="v">primary<u>_</u>key</i>):</div><div class="ln" style="top:936px">27</div><div class="cl" style="top:936px"><i class="tb"><svg width="16" height="36"><use href="#ar"/></svg></i><i class="tb"><svg width="16" height="36"><use href="#ar"/></svg></i><i class="k">return</i><i class="w"> </i><i class="s">self</i>.connector.get<u>_</u>join<u>_</u>objects(object<u>_</u>type,<i class="w"> </i>join<u>_</u>type,<i class="w"> </i>primary<u>_</u>key)</div><div class="ln" style="top:972px">28</div><div class="cl" style="top:972px"></div><div style="position:absolute;left:1792px;top:0;width:1px;height:1388px;background:#3a3a3a"></div><div style="position:absolute;left:1793px;top:168px;width:9px;height:22px;background:#0d5789"></div><div style="position:absolute;left:1802px;top:169px;width:18px;height:4px;background:#838380"></div><div style="position:absolute;left:1793px;top:169px;width:9px;height:4px;background:#3a80b4"></div><div style="position:absolute;left:1793px;top:316px;width:9px;height:86px;background:#0d5789"></div></div></div>
<div id="status"><svg style="left:28px;top:8px" width="22" height="28" viewBox="0 0 22 28"><g fill="none" stroke="#fff"><circle cx="5.500" cy="4.500" r="2.700" stroke-width="1.700"/><circle cx="5.500" cy="22" r="2.700" stroke-width="1.700"/><circle cx="16" cy="8" r="2.700" stroke-width="1.700"/><path d="M5.500 7.500 V19" stroke-width="3.200"/><path d="M15.800 10.800 C15.500 16 9 15.500 5.800 17.800" stroke-width="3"/></g></svg><span style="left:54px;letter-spacing:1.13px">rmehta-hub-various*</span><svg style="left:322px;top:9px" width="25" height="24" viewBox="0 0 25 24"><g fill="none" stroke="#fff" stroke-width="2.800"><path d="M4 11 A8.500 8.500 0 0 1 19.500 6.500"/><path d="M21 13 A8.500 8.500 0 0 1 5.500 17.500"/></g><path d="M22.500 2 V10 H14.500 Z M2.500 22 V14 H10.500 Z" fill="#fff"/></svg><svg style="left:371px;top:11px" width="23" height="23" viewBox="0 0 23 23"><circle cx="11.500" cy="11.500" r="11" fill="#fff"/><path d="M6.500 6.500 L16.500 16.500 M16.500 6.500 L6.500 16.500" stroke="#007acc" stroke-width="3"/></svg><span style="left:401px">0</span><svg style="left:425px;top:11px" width="24" height="23" viewBox="0 0 24 23"><path d="M12 0.500 L23.500 22.500 H0.500 Z" fill="#fff"/><path d="M10.500 8 h3 l-0.600 8 h-1.800 z M10.700 17.500 h2.600 v2.600 h-2.600 z" fill="#007acc"/></svg><span style="left:456px">0</span><span style="left:1806px;letter-spacing:0.55px">Ln 9, Col 47</span><span style="left:1973px;letter-spacing:0.63px">Tab Size: 4</span><span style="left:2130px;letter-spacing:0.6px">UTF-8</span><span style="left:2234px;letter-spacing:0.6px">LF</span><span style="left:2291px;letter-spacing:0.7px">MagicPython</span><svg style="left:2499px;top:7px" width="30" height="30" viewBox="0 0 30 30"><circle cx="15.100" cy="15" r="14.100" fill="#fff"/><ellipse cx="10.200" cy="9.300" rx="2.100" ry="2.700" fill="#007acc"/><ellipse cx="20" cy="9.300" rx="2.100" ry="2.700" fill="#007acc"/><path d="M6.500 17.200 Q15 29.600 23.300 17.200" fill="none" stroke="#007acc" stroke-width="2.200" stroke-linecap="round"/></svg></div>
</div>
</body></html>
